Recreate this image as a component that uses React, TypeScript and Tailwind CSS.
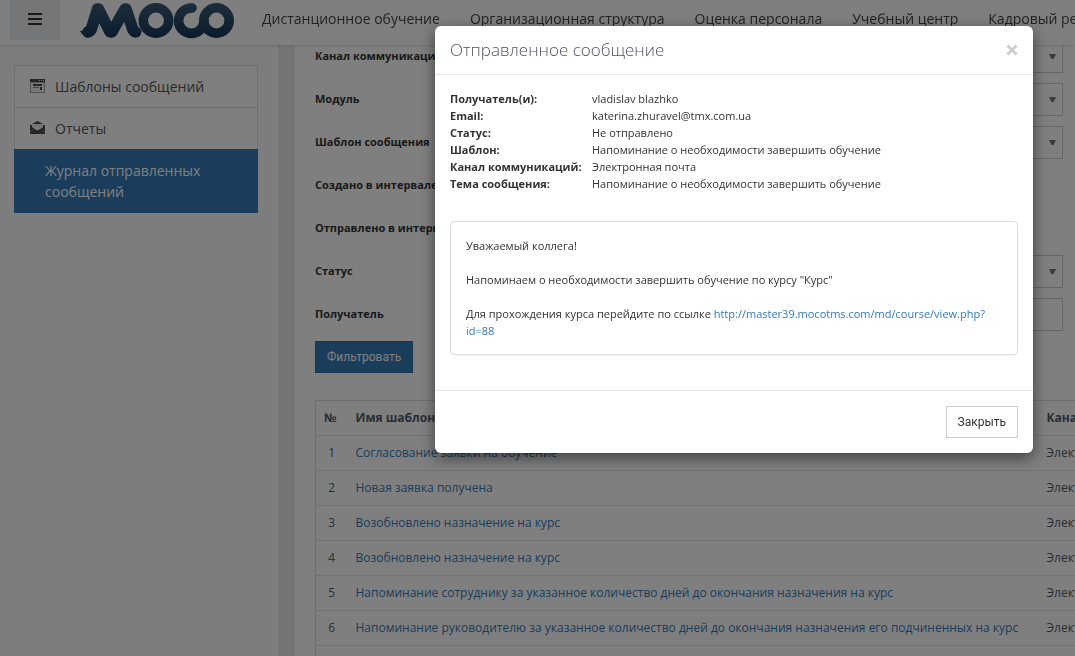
import { useState } from "react";

const navItems = [
  "Дистанционное обучение",
  "Организационная структура",
  "Оценка персонала",
  "Учебный центр",
  "Кадровый резерв",
];

const filters = [
  { id: "channel", label: "Канал коммуникаций", type: "select" },
  { id: "module", label: "Модуль", type: "select" },
  { id: "template", label: "Шаблон сообщения", type: "select" },
  { id: "created", label: "Создано в интервале", type: "none" },
  { id: "sent", label: "Отправлено в интервале", type: "none" },
  { id: "status", label: "Статус", type: "select" },
  { id: "recipient", label: "Получатель", type: "input" },
];

const rows = [
  "Согласование заявки на обучение",
  "Новая заявка получена",
  "Возобновлено назначение на курс",
  "Возобновлено назначение на курс",
  "Напоминание сотруднику за указанное количество дней до окончания назначения на курс",
  "Напоминание руководителю за указанное количество дней до окончания назначения его подчиненных на курс",
];

const details = [
  ["Получатель(и):", "vladislav blazhko"],
  ["Email:", "katerina.zhuravel@tmx.com.ua"],
  ["Статус:", "Не отправлено"],
  ["Шаблон:", "Напоминание о необходимости завершить обучение"],
  ["Канал коммуникаций:", "Электронная почта"],
  ["Тема сообщения:", "Напоминание о необходимости завершить обучение"],
];

function Logo() {
  return (
    <svg width="156" height="38" viewBox="79 2 156 38" fill="none" role="img" aria-label="MOCO">
      <defs>
        <linearGradient id="logo" gradientUnits="userSpaceOnUse" x1="0" y1="3" x2="0" y2="38">
          <stop offset="0" stopColor="#3a5b74" />
          <stop offset="1" stopColor="#14375c" />
        </linearGradient>
      </defs>
      <g stroke="url(#logo)" strokeLinecap="round" strokeLinejoin="round">
        <path strokeWidth="11.5" d="M88 32Q91 31 92 27L97.5 9L98.500 9L109.500 31Q111 33 112.500 31L125 9L126 9L132 27Q133 31 135.500 32" />
        <circle cx="156" cy="20.500" r="12.700" strokeWidth="9.600" />
        <circle cx="216.500" cy="20.500" r="12.700" strokeWidth="9.600" />
        <path strokeWidth="9.600" d="M192 8A12.700 12.700 0 1 0 204 21" />
      </g>
      <path fill="url(#logo)" d="M80 31Q84 31 86 28L90 34L85 36Q81 34 80 31ZM142 31Q139 31 137 28L134 34L138 36Q141 34 142 31Z" />
    </svg>
  );
}

function TemplatesIcon() {
  return (
    <svg width="15" height="14" viewBox="0 0 15 14" aria-hidden="true" className="mb-0.5">
      <path fill="#a4a9b0" d="M0 0h15v14H0z" />
      <path fill="#f0f2f4" d="M1 4h13v9H1z" />
      <path fill="#4a4a4a" d="M0 0h15v3H0z" />
      <path fill="#d8dce0" d="M9 1h1v1H9zM11 1h1v1h-1zM13 1h1v1h-1z" />
      <path fill="#4a4a4a" d="M3 5h9v2H3zM10 8h2v3h-2z" />
      <path fill="#8a8f96" d="M3 8h6v1H3z" />
    </svg>
  );
}

function ReportsIcon() {
  return (
    <svg width="15" height="13" viewBox="0 0 15 13" aria-hidden="true" className="mb-0.5">
      <path fill="#4a4a4a" d="M7.500 0L13 3H2zM0 4h2v2l3 2-5 3zM15 4h-2v2l-3 2 5 3zM0 13v-1.500l5-3.500 2.500 1.500L10 8l5 3.500V13z" />
      <path fill="#ececec" d="M2 3h11v3L9 8 7.500 7 5 8 2 6z" />
    </svg>
  );
}

function FilterControl({ id, type }: { id: string; type: string }) {
  if (type === "select") {
    return (
      <div className="relative flex-1">
        <select id={id} className="block h-[33px] w-full appearance-none border border-[#ccc] bg-white px-3" />
        <svg className="pointer-events-none absolute top-3.5 right-[7px]" width="7" height="5" viewBox="0 0 7 5" aria-hidden="true">
          <path fill="#777" d="M0 0h7L4.500 5h-2z" />
        </svg>
      </div>
    );
  }
  if (type === "input") {
    return <input id={id} type="text" className="h-[33px] flex-1 border border-[#ccc] bg-white px-3" />;
  }
  return null;
}

export default function App() {
  const [open, setOpen] = useState(true);

  return (
    <div className="h-screen overflow-hidden bg-[#fafafa] font-['Open_Sans','Noto_Sans',sans-serif] text-[11px] text-[#333]">
      <header className="fixed inset-x-0 top-0 z-10 flex h-[45px] items-start overflow-hidden bg-white shadow-sm">
        <button type="button" aria-label="Меню" className="ml-2.5 flex h-10 w-[50px] shrink-0 items-center justify-center bg-[#e9edf1] pb-0.5">
          <svg width="14" height="12" viewBox="0 0 14 12" aria-hidden="true">
            <path fill="#333" d="M0 0h14v2H0zM0 5h14v2H0zM0 10h14v2H0z" />
          </svg>
        </button>
        <a href="#" className="ml-[19px] shrink-0 pt-0.5">
          <Logo />
        </a>
        <nav className="ml-[27px] flex gap-[30px] pt-2 text-sm leading-[21px] whitespace-nowrap text-[#444]">
          {navItems.map((item) => (
            <a key={item} href="#">{item}</a>
          ))}
        </nav>
      </header>

      <div className="flex h-full">
        <aside className="w-[278px] shrink-0 pt-[65px] pr-5 pl-3.5 text-sm leading-[21px] text-[#555]">
          <a href="#" className="flex h-[42px] items-center gap-2.5 border border-b-0 border-[#ddd] bg-white pl-[15px]">
            <TemplatesIcon />
            Шаблоны сообщений
          </a>
          <a href="#" className="flex h-[42px] items-center gap-2.5 border border-b-0 border-[#ddd] bg-white pl-[15px]">
            <ReportsIcon />
            Отчеты
          </a>
          <a href="#" className="block bg-[#337ab7] py-[11px] pr-4 pl-[31px] leading-[21px] text-white">
            Журнал отправленных сообщений
          </a>
        </aside>

        <main className="ml-[17px] min-w-0 flex-1 overflow-hidden bg-white pt-10 pl-5 shadow-[-17px_0_0_#e8e8e8]">
          <form className="pr-3" onSubmit={(e) => e.preventDefault()}>
            {filters.map((f) => (
              <div key={f.id} className="mb-2.5 flex h-[33px]">
                <label htmlFor={f.id} className="w-1/4 pt-[7px] leading-[17px] font-bold whitespace-nowrap">
                  {f.label}
                </label>
                <FilterControl id={f.id} type={f.type} />
              </div>
            ))}
            <button type="submit" className="h-8 border border-[#2e6da4] bg-[#337ab7] px-[11px] font-['Roboto',sans-serif] text-xs text-white">
              Фильтровать
            </button>
          </form>

          <table className="mt-[27px] w-max border border-[#ddd] text-xs whitespace-nowrap text-[#4f5b69]">
            <thead>
              <tr className="h-[35px] border-b border-[#e7e7e7]">
                <th className="min-w-8 px-2 text-left">№</th>
                <th className="min-w-[691px] px-2 text-left">Имя шаблона</th>
                <th className="px-2 text-left">Канал</th>
              </tr>
            </thead>
            <tbody>
              {rows.map((row, i) => (
                <tr key={i} className="h-[35px] border-b border-[#e7e7ea]">
                  <td className="px-2 text-center">{i + 1}</td>
                  <td className="px-2">
                    <a href="#" className="text-[#337ab7]">{row}</a>
                  </td>
                  <td className="px-2">Электронная почта</td>
                </tr>
              ))}
              <tr className="h-[35px]">
                <td colSpan={3} />
              </tr>
            </tbody>
          </table>
        </main>
      </div>

      {open && (
        <div className="fixed inset-0 z-20 flex items-start justify-end bg-black/50 pt-[26px] pr-[42px]">
          <div role="dialog" aria-modal="true" aria-labelledby="dialog-title" className="w-[598px] rounded-md bg-white shadow-[0_5px_15px_rgba(0,0,0,0.5)]">
            <div className="flex items-center justify-between border-b border-[#e5e5e5] px-[15px] py-3">
              <h4 id="dialog-title" className="text-[17px] leading-6 font-light text-[#515365]">
                Отправленное сообщение
              </h4>
              <button type="button" aria-label="Закрыть окно" onClick={() => setOpen(false)}>
                <svg width="12" height="12" viewBox="0 0 12 12" aria-hidden="true">
                  <path fill="none" stroke="#ccc" strokeWidth="2.800" d="M1.500 1.500l9 9M10.500 1.500l-9 9" />
                </svg>
              </button>
            </div>
            <div className="px-[15px] pt-[15px] pb-[35px] leading-[17px]">
              <table>
                <tbody>
                  {details.map(([name, value]) => (
                    <tr key={name}>
                      <th className="min-w-[142px] text-left whitespace-nowrap">{name}</th>
                      <td>{value}</td>
                    </tr>
                  ))}
                </tbody>
              </table>
              <div className="mt-[29px] flex flex-col gap-[17px] rounded border border-[#ddd] p-[15px] shadow-xs">
                <p>Уважаемый коллега!</p>
                <p>Напоминаем о необходимости завершить обучение по курсу "Курс"</p>
                <p>
                  Для прохождения курса перейдите по ссылке{" "}
                  <a href="#" className="text-[#337ab7]">http://master39.mocotms.com/md/course/view.php?id=88</a>
                </p>
              </div>
            </div>
            <div className="flex justify-end border-t border-[#e5e5e5] p-[15px]">
              <button type="button" className="h-8 border border-[#ccc] bg-white px-[11px] font-['Roboto',sans-serif] text-xs" onClick={() => setOpen(false)}>
                Закрыть
              </button>
            </div>
          </div>
        </div>
      )}
    </div>
  );
}
